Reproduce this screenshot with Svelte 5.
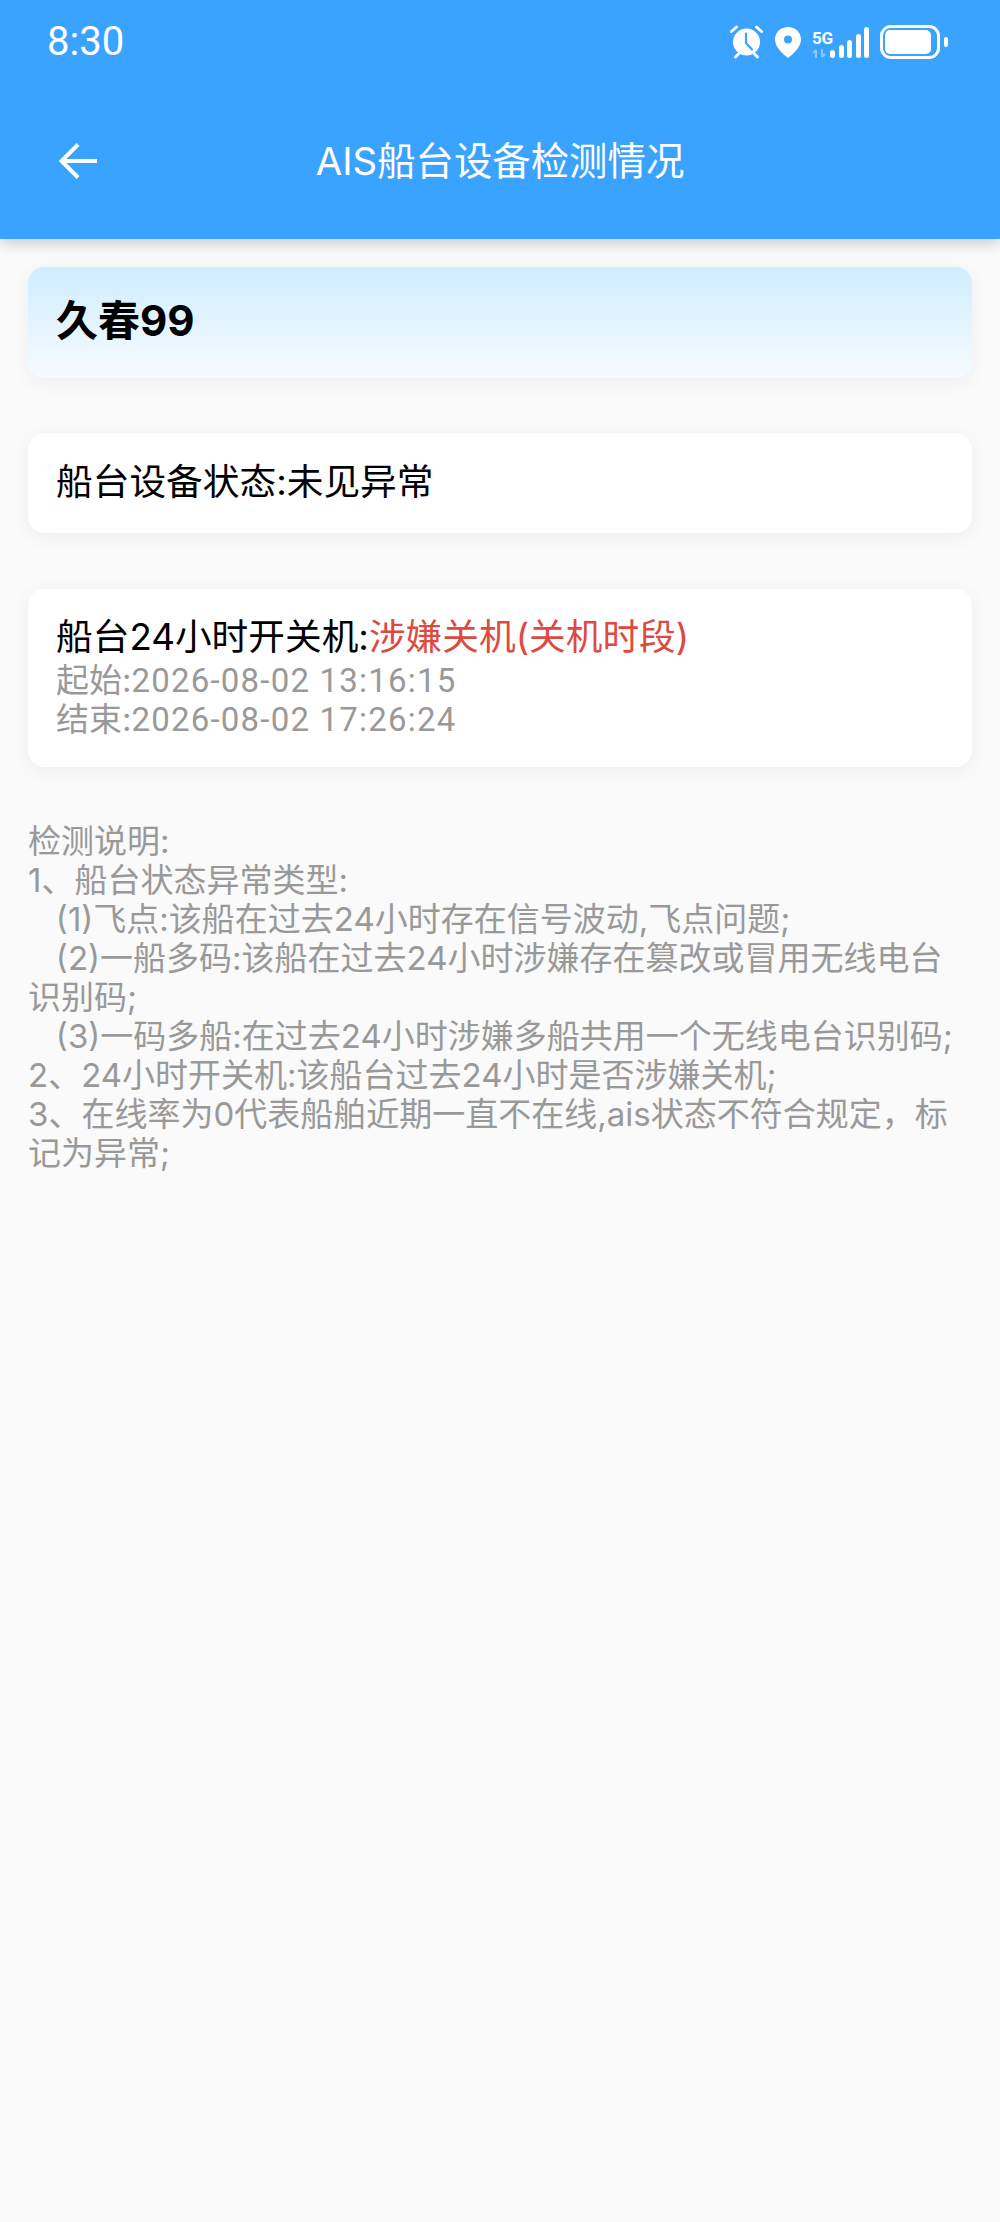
<script>
  const notes = [
    '检测说明:',
    '1、船台状态异常类型:',
    '   (1)飞点:该船在过去24小时存在信号波动,飞点问题;',
    '   (2)一船多码:该船在过去24小时涉嫌存在篡改或冒用无线电台识别码;',
    '   (3)一码多船:在过去24小时涉嫌多船共用一个无线电台识别码;',
    '2、24小时开关机:该船台过去24小时是否涉嫌关机;',
    '3、在线率为0代表船舶近期一直不在线,ais状态不符合规定\uFF0C标记为异常;'
  ];
  const spans = [
    { label: '起始:', date: '2026-08-02 13:16:15' },
    { label: '结束:', date: '2026-08-02 17:26:24' }
  ];
</script>

<div class="page">
  <header class="top">
    <div class="status">
      <span class="time">8:30</span>
      <div class="icons">
        <svg class="alarm" width="33" height="34" viewBox="0 0 33 34" fill="none">
          <circle cx="16.500" cy="17" r="13.500" fill="#fff"/>
          <path d="M16 8.500V18l6 6.500" stroke="#3aa2ff" stroke-width="2.200" stroke-linecap="round"/>
          <path d="M1.500 6.500 6.500 2M31.500 6.500 26.500 2M5.500 32l3-3M27.500 32l-3-3" stroke="#fff" stroke-width="3" stroke-linecap="round"/>
        </svg>
        <svg class="pin" width="26" height="31" viewBox="0 0 26 31">
          <path fill-rule="evenodd" fill="#fff" d="M13 0C5.800 0 0 5.400 0 12.500 0 20 7.500 27 13 31 18.500 27 26 20 26 12.500 26 5.400 20.200 0 13 0Zm0 8.500a4 4 0 1 1 0 8 4 4 0 0 1 0-8Z"/>
        </svg>
        <div class="net">
          <div class="net-label">
            <span class="g5">5G</span>
            <svg width="14" height="9" viewBox="0 0 14 9" fill="none">
              <path d="M4 9V1M1 4l3-3M10 0v8M13 5l-3 3" stroke="#8cc8ff" stroke-width="2"/>
            </svg>
          </div>
          <div class="bars">
            <i style="height:8px"></i><i style="height:13px"></i><i style="height:18px"></i><i style="height:24px"></i><i style="height:31px"></i>
          </div>
        </div>
        <div class="batt"><div class="batt-fill"></div></div>
        <div class="nub"></div>
      </div>
    </div>
    <div class="nav">
      <svg class="back" width="38" height="36" viewBox="0 0 38 36" fill="none">
        <path d="M19 1.500 2.500 18 19 34.500M2.500 18H38" stroke="#fff" stroke-width="4"/>
      </svg>
      <h1>AIS船台设备检测情况</h1>
      <span></span>
    </div>
  </header>

  <main class="content">
    <section class="card title"><strong>久春99</strong></section>
    <section class="card state">船台设备状态:未见异常</section>
    <section class="card power">
      <div class="power-head">船台24小时开关机:<span class="red">涉嫌关机(关机时段)</span></div>
      {#each spans as s}
        <div class="sub">{s.label}<span class="date">{s.date}</span></div>
      {/each}
    </section>
    <section class="notes">
      {#each notes as n}<div>{n}</div>{/each}
    </section>
  </main>
</div>

<style>
  :global(body) { margin: 0; background: #fafafa; }
  .page {
    width: 1000px; height: 2222px; overflow: hidden; background: #fafafa;
    font-family: Inter, "Noto Sans CJK SC", sans-serif;
  }
  .top {
    height: 239px; background: #3aa2ff; color: #fff;
    box-shadow: 0 4px 14px rgba(0,0,0,.2);
    display: flex; flex-direction: column;
    position: relative;
  }
  .status { height: 84px; display: flex; justify-content: space-between; align-items: center; padding-left: 47px; }
  .time { font: 400 40px/1 Roboto, sans-serif; }
  .icons { display: flex; align-items: center; margin-right: 52px; }
  .pin { margin-left: 12px; }
  .net { display: flex; align-items: flex-end; margin-left: 11px; height: 31px; }
  .net-label { display: flex; flex-direction: column; width: 18px; }
  .g5 { font: 700 17px/21px Roboto, sans-serif; letter-spacing: -0.3px; white-space: nowrap; }
  .net-label svg { display: block; }
  .bars { display: flex; align-items: flex-end; gap: 3.500px; }
  .bars i { width: 5px; background: #fff; border-radius: 2.500px; display: block; }
  .batt { width: 60px; height: 34px; box-sizing: border-box; border: 3px solid #fff; border-radius: 11px; padding: 2px; margin-left: 11px; }
  .batt-fill { width: 46px; height: 24px; background: #fff; border-radius: 5px; }
  .nub { width: 4px; height: 10px; background: #fff; border-radius: 2px; margin-left: 4px; }
  .nav { flex: 1; display: grid; grid-template-columns: 1fr auto 1fr; align-items: center; padding-bottom: 2px; }
  .back { margin-left: 59px; }
  .nav h1 { margin: 0; font-size: 38.400px; font-weight: 400; line-height: 48px; }
  .content { padding: 28px 28px 0; display: flex; flex-direction: column; }
  .card {
    background: #fff; border-radius: 16px; padding: 0 28px; box-sizing: border-box;
    box-shadow: 0 4px 18px rgba(90,90,150,.07); color: #000;
  }
  .title { height: 111px; background: linear-gradient(#cfedff, #f7fbff); padding-top: 26px; font-size: 42px; line-height: 56px; }
  .title strong { font-weight: 700; }
  .state { height: 100px; margin-top: 55px; font-size: 36.700px; line-height: 50px; padding-top: 24px; }
  .power { height: 178px; margin-top: 56px; padding-top: 26px; }
  .power-head { font-size: 36.700px; line-height: 44px; margin-bottom: 2px; }
  .red { color: #dd4a3f; }
  .sub { font-size: 33px; line-height: 39px; color: #999; }
  .date { font-family: Roboto, sans-serif; letter-spacing: 1.200px; }
  .notes { margin-top: 55px; font-size: 33px; line-height: 39px; color: #999; white-space: pre-wrap; }
</style>
